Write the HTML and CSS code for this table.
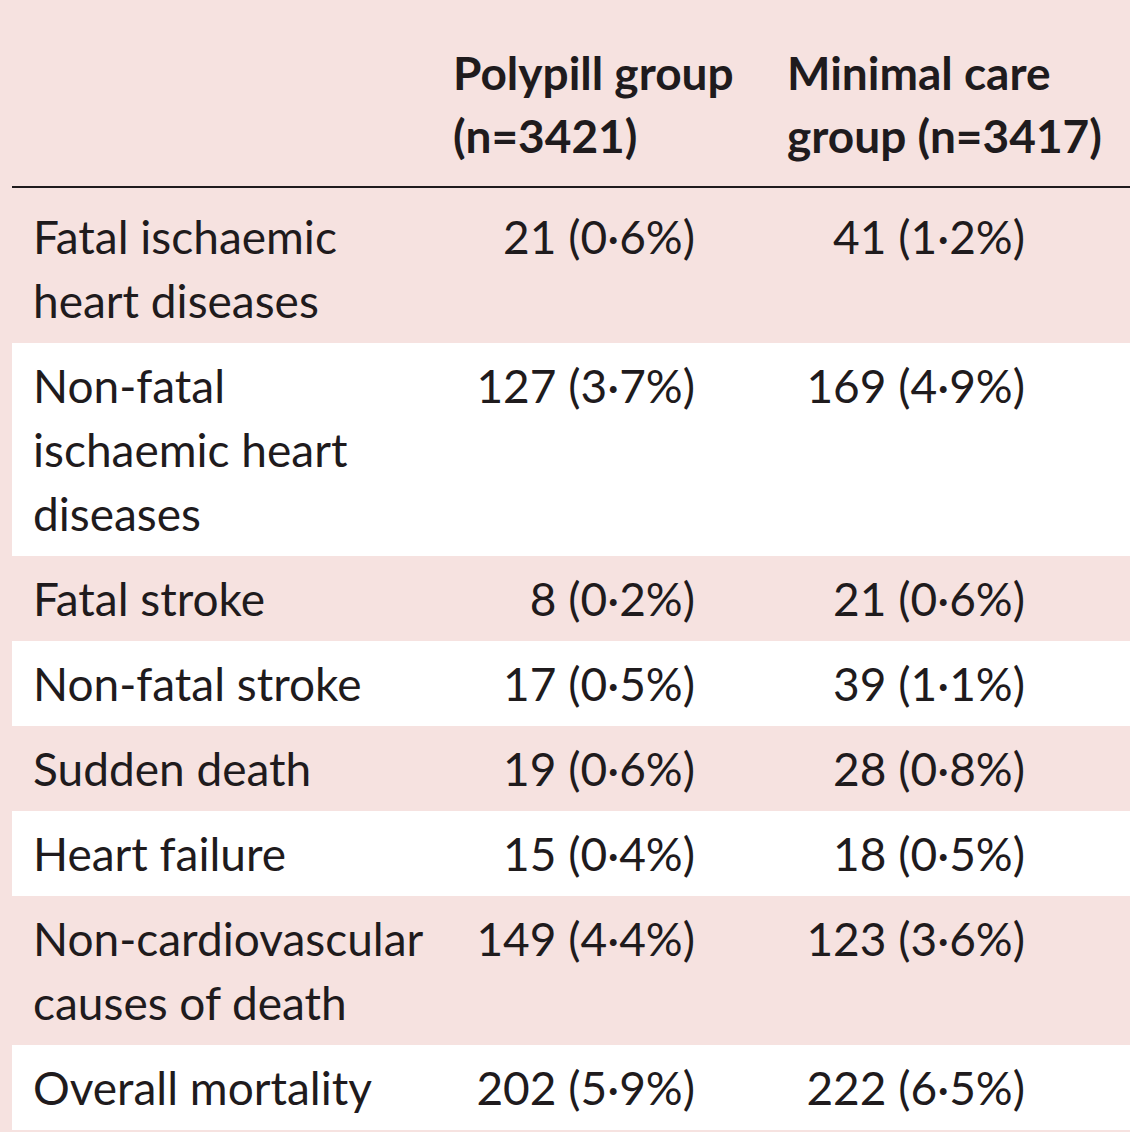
FILE: index.html
```html
<!DOCTYPE html>
<html lang="en">
<head>
<meta charset="utf-8">
<title>Outcomes</title>
<link rel="stylesheet" href="styles.css">
</head>
<body>
<table class="outcomes">
  <thead>
    <tr>
      <th class="label-col"></th>
      <th class="group-col group-a">Polypill group<br>(n=3421)</th>
      <th class="group-col group-b">Minimal care<br>group (n=3417)</th>
    </tr>
  </thead>
  <tbody>
    <tr class="shaded first">
      <td class="label">Fatal ischaemic<br>heart diseases</td>
      <td class="val val-a">21 (0·6%)</td>
      <td class="val val-b">41 (1·2%)</td>
    </tr>
    <tr class="plain">
      <td class="label">Non-fatal<br>ischaemic heart<br>diseases</td>
      <td class="val val-a">127 (3·7%)</td>
      <td class="val val-b">169 (4·9%)</td>
    </tr>
    <tr class="shaded">
      <td class="label">Fatal stroke</td>
      <td class="val val-a">8 (0·2%)</td>
      <td class="val val-b">21 (0·6%)</td>
    </tr>
    <tr class="plain">
      <td class="label">Non-fatal stroke</td>
      <td class="val val-a">17 (0·5%)</td>
      <td class="val val-b">39 (1·1%)</td>
    </tr>
    <tr class="shaded">
      <td class="label">Sudden death</td>
      <td class="val val-a">19 (0·6%)</td>
      <td class="val val-b">28 (0·8%)</td>
    </tr>
    <tr class="plain">
      <td class="label">Heart failure</td>
      <td class="val val-a">15 (0·4%)</td>
      <td class="val val-b">18 (0·5%)</td>
    </tr>
    <tr class="shaded">
      <td class="label">Non-cardiovascular<br>causes of death</td>
      <td class="val val-a">149 (4·4%)</td>
      <td class="val val-b">123 (3·6%)</td>
    </tr>
    <tr class="plain">
      <td class="label">Overall mortality</td>
      <td class="val val-a">202 (5·9%)</td>
      <td class="val val-b">222 (6·5%)</td>
    </tr>
  </tbody>
</table>
</body>
</html>
```

FILE: styles.css
```css
html, body {
  margin: 0;
  padding: 0;
  background: #f6e2e0;
}

body {
  padding-left: 12px;
  height: 1132px;
  overflow: hidden;
  font-family: "Lato", "Liberation Sans", sans-serif;
  color: #1f1b1d;
}

.outcomes {
  width: 1118px;
  border-collapse: collapse;
  table-layout: fixed;
  font-size: 46px;
  line-height: 64px;
}

.outcomes th,
.outcomes td {
  box-sizing: border-box;
}

.label-col { width: 428px; }
.group-a { width: 335px; }
.group-b { width: 355px; }

thead th {
  text-align: left;
  font-weight: 700;
  vertical-align: bottom;
  padding: 41px 0 19px 0;
  line-height: 63px;
  border-bottom: 2px solid #1f1b1d;
  white-space: nowrap;
}

thead .group-a { padding-left: 13px; }
thead .group-b { padding-left: 12px; }

tbody td {
  vertical-align: top;
  padding: 11px 0 10px 0;
  white-space: nowrap;
}

tbody tr.first td { padding-top: 17px; }

.shaded { background: #f6e2e0; }
.plain { background: #ffffff; }

.label { padding-left: 21px; }

.label-tight { letter-spacing: -0.4px; }

.val { text-align: right; }
.val-a { padding-right: 80px; }
.val-b { padding-right: 105px; }
```
